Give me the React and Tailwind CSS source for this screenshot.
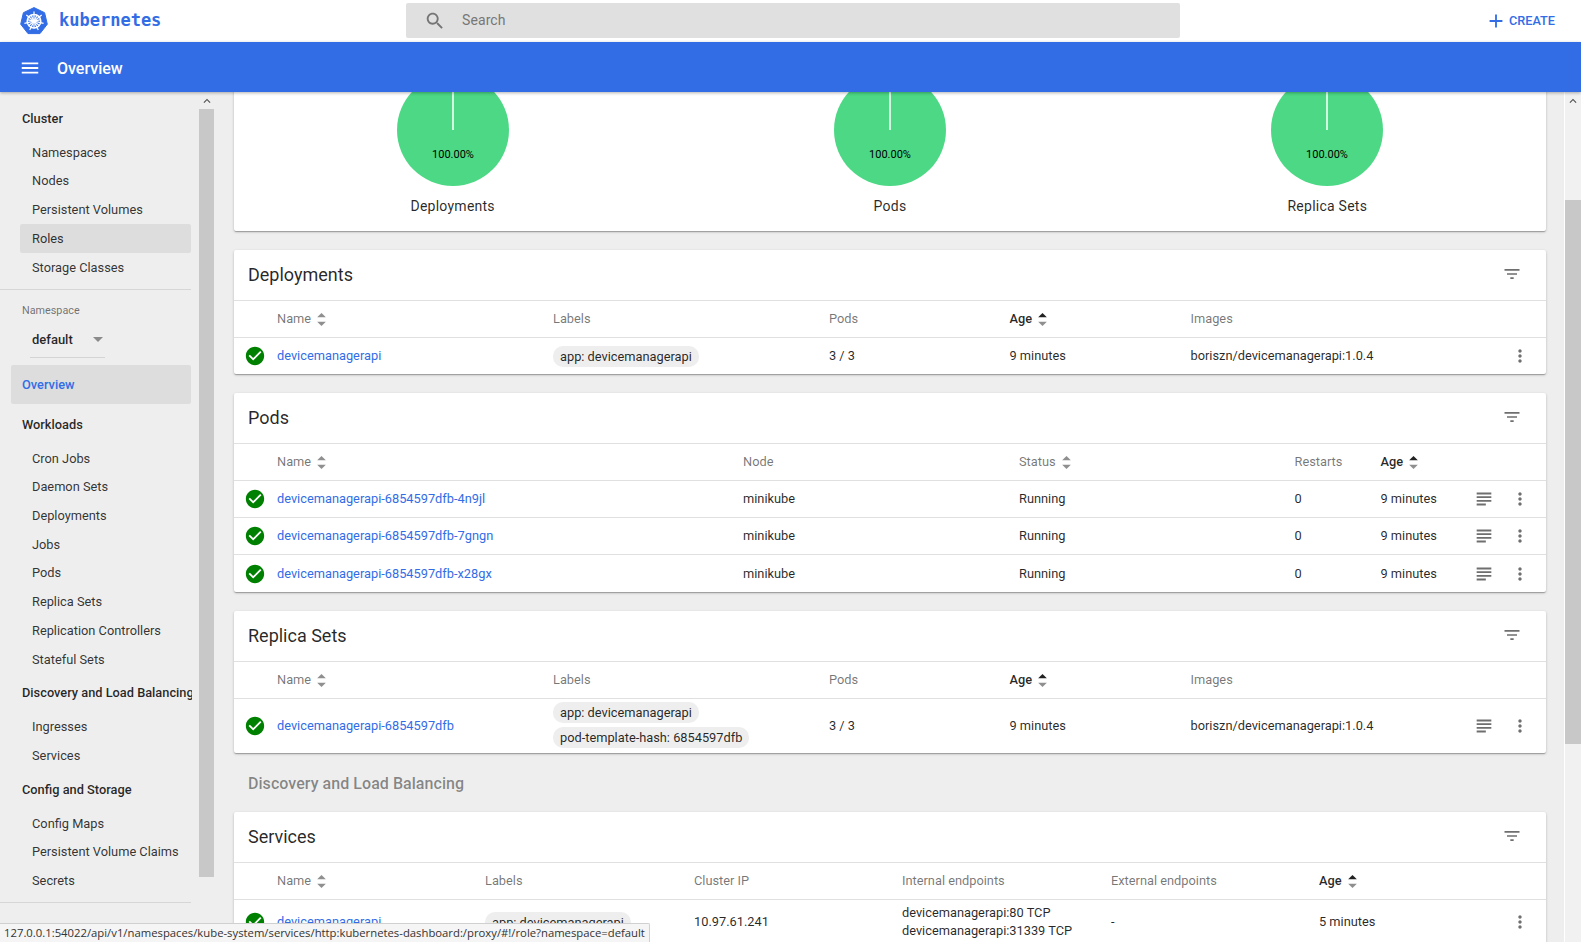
const SORT_UP = "M4 0 L8 4 L0 4 Z";
const SORT_DOWN = "M4 12 L8 8 L0 8 Z";

function Icon({ d, size = 24, className = "" }) {
  return (
    <svg viewBox="0 0 24 24" width={size} height={size} className={className} fill="currentColor">
      <path d={d} />
    </svg>
  );
}

const icons = {
  search:
    "M15.5 14h-.79l-.28-.27C15.41 12.59 16 11.11 16 9.5 16 5.91 13.09 3 9.5 3S3 5.91 3 9.5 5.91 16 9.5 16c1.61 0 3.09-.59 4.23-1.57l.27.28v.79l5 4.99L20.49 19l-4.99-5zm-6 0C7.01 14 5 11.99 5 9.5S7.01 5 9.5 5 14 7.01 14 9.5 11.99 14 9.5 14z",
  menu: "M3 18h18v-2H3v2zm0-5h18v-2H3v2zm0-7v2h18V6H3z",
  plus: "M19 13h-6v6h-2v-6H5v-2h6V5h2v6h6v2z",
  filter: "M10 18h4v-2h-4v2zM3 6v2h18V6H3zm3 7h12v-2H6v2z",
  lines: "M14 17H4v2h10v-2zm6-8H4v2h16V9zM4 15h16v-2H4v2zM4 5v2h16V5H4z",
  more: "M12 8c1.1 0 2-.9 2-2s-.9-2-2-2-2 .9-2 2 .9 2 2 2zm0 2c-1.1 0-2 .9-2 2s.9 2 2 2 2-.9 2-2-.9-2-2-2zm0 6c-1.1 0-2 .9-2 2s.9 2 2 2 2-.9 2-2-.9-2-2-2z",
  check: "M12 2C6.48 2 2 6.48 2 12s4.48 10 10 10 10-4.48 10-10S17.52 2 12 2zm-2 15l-5-5 1.41-1.41L10 14.17l7.59-7.59L19 8l-9 9z",
  up: "M7.41 15.41L12 10.83l4.59 4.58L18 14l-6-6-6 6z",
};

function Logo() {
  const spokes = [0, 1, 2, 3, 4, 5, 6].map((i) => (i * 360) / 7);
  return (
    <svg viewBox="0 0 28 28" width="28" height="28">
      <path d="M14 .6 L24.6 5.7 L27.3 17.2 L20 26.6 L8 26.6 L.7 17.2 L3.4 5.7 Z" fill="#326de6" stroke="#326de6" strokeLinejoin="round" />
      <circle cx="14" cy="14.2" r="6.8" fill="none" stroke="#fff" strokeWidth="1.5" />
      <circle cx="14" cy="14.2" r="1.3" fill="#fff" />
      {spokes.map((a) => (
        <line key={a} x1="14" y1="14.2" x2="14" y2="4.4" stroke="#fff" strokeWidth="1.2" transform={`rotate(${a} 14 14.2)`} />
      ))}
      {spokes.map((a) => (
        <line key={`b${a}`} x1="14" y1="14.2" x2="14" y2="7" stroke="#fff" strokeWidth="1.2" transform={`rotate(${a + 25.7} 14 14.2)`} />
      ))}
    </svg>
  );
}

function SidebarTitle({ children }) {
  return (
    <div className="h-[34px] w-[192px] pl-[22px] flex items-center overflow-hidden whitespace-nowrap text-[12.8px] font-medium text-black/85">
      {children}
    </div>
  );
}

function SidebarItem({ label, active }) {
  return (
    <div
      className={`h-[28.7px] ml-[20px] w-[171px] pl-[12px] flex items-center text-[12.8px] text-black/80 rounded-[2px] ${active ? "bg-[#dddddd]" : ""}`}
    >
      {label}
    </div>
  );
}

function Sidebar() {
  return (
    <aside className="w-[214px] shrink-0 flex bg-[#eeeeee] overflow-hidden">
      <div className="w-[199px] shrink-0 pt-[10px]">
        <SidebarTitle>Cluster</SidebarTitle>
        <div className="pt-[2px]">
          {["Namespaces", "Nodes", "Persistent Volumes"].map((l) => (
            <SidebarItem key={l} label={l} />
          ))}
          <SidebarItem label="Roles" active />
          <SidebarItem label="Storage Classes" />
        </div>
        <div className="mt-[7.5px] w-[191px] border-t border-[#d6d6d6]" />
        <div className="mt-[14px] ml-[22px] text-[10.8px] leading-[14px] text-black/55">Namespace</div>
        <div className="mt-[9px] ml-[30px] w-[75px] h-[31px] flex items-center justify-between border-b border-[#d4d4d4] pl-[2px] pr-[2px] pb-[4px]">
          <span className="text-[13px] font-medium text-black/85">default</span>
          <span className="w-0 h-0 border-x-[5px] border-x-transparent border-t-[5px] border-t-[#8a8a8a]" />
        </div>
        <div className="mt-[7px] ml-[11px] w-[180px] h-[39px] pl-[11px] flex items-center bg-[#dddddd] rounded-[2px] text-[12.8px] font-medium text-[#326de6]">
          Overview
        </div>
        <div className="mt-[4px]">
          <SidebarTitle>Workloads</SidebarTitle>
        </div>
        <div className="pt-[2px]">
          {["Cron Jobs", "Daemon Sets", "Deployments", "Jobs", "Pods", "Replica Sets", "Replication Controllers", "Stateful Sets"].map((l) => (
            <SidebarItem key={l} label={l} />
          ))}
        </div>
        <div className="mt-[2px]">
          <SidebarTitle>Discovery and Load Balancing</SidebarTitle>
        </div>
        <div className="pt-[3px]">
          {["Ingresses", "Services"].map((l) => (
            <SidebarItem key={l} label={l} />
          ))}
        </div>
        <div className="mt-[3px]">
          <SidebarTitle>Config and Storage</SidebarTitle>
        </div>
        <div className="pt-[2px]">
          {["Config Maps", "Persistent Volume Claims", "Secrets"].map((l) => (
            <SidebarItem key={l} label={l} />
          ))}
        </div>
        <div className="mt-[7px] w-[191px] border-t border-[#d6d6d6]" />
      </div>
      <Scrollbar thumbTop={0} thumbHeight={768} />
    </aside>
  );
}

function Scrollbar({ thumbTop, thumbHeight }) {
  return (
    <div className="w-[15px] shrink-0 flex flex-col items-stretch">
      <div className="h-[17px] flex items-center justify-center text-[#505050] shrink-0">
        <Icon d={icons.up} size={14} />
      </div>
      <div style={{ marginTop: thumbTop, height: thumbHeight }} className="bg-[#c8c8c8] shrink-0" />
    </div>
  );
}

function SortHeader({ label, sort, active }) {
  return (
    <div className={`flex items-center gap-[6px] text-[12.8px] ${active ? "font-medium text-black/85" : "text-black/55"}`}>
      <span>{label}</span>
      {sort && (
        <svg viewBox="0 0 8 12" width="9" height="13">
          <path d={SORT_UP} fill={active ? "#222222" : "#8f8f8f"} />
          <path d={SORT_DOWN} fill="#8f8f8f" />
        </svg>
      )}
    </div>
  );
}

function Chip({ children }) {
  return <span className="inline-block h-[21px] leading-[21px] px-[7px] rounded-[10px] bg-[#eeeeee] text-[12.8px] whitespace-nowrap text-black/85">{children}</span>;
}

function Actions({ lines = true }) {
  return (
    <div className="flex items-center justify-end pr-[16px] text-[#6f6f6f]">
      {lines && <Icon d={icons.lines} size={22} className="mr-[15px]" />}
      <Icon d={icons.more} size={20} />
    </div>
  );
}

function StatusIcon() {
  return (
    <div className="flex justify-center pr-[1px] text-[#008000]">
      <Icon d={icons.check} size={22} />
    </div>
  );
}

function Card({ title, grid, head, rows }) {
  return (
    <section className="bg-white rounded-[2px] shadow-[0_1px_3px_0_rgba(0,0,0,0.2),0_1px_1px_0_rgba(0,0,0,0.14),0_2px_1px_-1px_rgba(0,0,0,0.12)]">
      <div className="h-[51px] pl-[14px] pr-[24px] pb-[2px] flex items-center justify-between border-b border-[#e0e0e0]">
        <h2 className="text-[18px] text-black/85">{title}</h2>
        <Icon d={icons.filter} size={20} className="text-[#6f6f6f]" />
      </div>
      <div className={`${grid} h-[37px] items-center border-b border-[#e0e0e0]`}>
        <div />
        {head.map((h) => (
          <SortHeader key={h.label} {...h} />
        ))}
      </div>
      {rows.map((row, i) => (
        <div
          key={i}
          className={`${grid} ${row.height || "h-[37px]"} items-center text-[12.8px] text-black/85 ${i < rows.length - 1 ? "border-b border-[#e0e0e0]" : ""}`}
        >
          <StatusIcon />
          {row.cells}
          <Actions lines={row.lines} />
        </div>
      ))}
    </section>
  );
}

const link = (t) => <a className="text-[#326de6] whitespace-nowrap">{t}</a>;

const DEPLOY_GRID = "grid grid-cols-[43px_276px_276px_180.5px_181px_1fr_130px]";
const POD_GRID = "grid grid-cols-[43px_466px_276px_275.5px_86px_1fr_90px]";
const SERVICE_GRID = "grid grid-cols-[43px_208px_209px_208px_209px_208px_1fr_60px]";

function Pie({ label }) {
  return (
    <div className="flex flex-col items-center">
      <svg width="112" height="112" viewBox="0 0 112 112">
        <circle cx="56" cy="56" r="56" fill="#4cd884" />
        <line x1="56" y1="0" x2="56" y2="56" stroke="#ffffff" strokeWidth="1.5" />
        <text x="56" y="84" textAnchor="middle" fontSize="11" fill="#000000">100.00%</text>
      </svg>
      <div className="mt-[10px] text-[14px] tracking-[0.25px] text-black/85">{label}</div>
    </div>
  );
}

function podRow(name) {
  return {
    cells: (
      <>
        <div>{link(name)}</div>
        <div>minikube</div>
        <div>Running</div>
        <div>0</div>
        <div>9 minutes</div>
      </>
    ),
  };
}

export default function App() {
  return (
    <div className="relative h-[942px] w-[1581px] overflow-hidden flex flex-col bg-[#eeeeee] font-['Roboto',sans-serif] text-black/85">
      <header className="h-[42px] shrink-0 bg-white flex items-center">
        <div className="w-[406px] shrink-0 pl-[20px] flex items-center gap-[11px]">
          <Logo />
          <span className="font-['DejaVu_Sans_Mono',monospace] font-bold text-[17px] text-[#326de6]">kubernetes</span>
        </div>
        <div className="w-[774px] h-[35px] mt-[-1px] bg-[#e0e0e0] rounded-[2px] flex items-center pl-[18px] text-[#757575]">
          <Icon d={icons.search} size={22} />
          <span className="ml-[16px] text-[14px] tracking-[0.1px] text-[#777777]">Search</span>
        </div>
        <div className="ml-auto pr-[26px] flex items-center gap-[2px] text-[#326de6]">
          <Icon d={icons.plus} size={22} />
          <span className="text-[12.7px] font-medium">CREATE</span>
        </div>
      </header>

      <div className="relative z-10 h-[50px] shrink-0 bg-[#326de6] flex items-center pl-[19px] shadow-[0_1px_3px_rgba(0,0,0,0.3)]">
        <Icon d={icons.menu} size={22} className="text-white mt-[1px]" />
        <span className="ml-[16px] mt-[3px] text-[16px] font-medium text-white">Overview</span>
      </div>

      <div className="flex flex-1 min-h-0">
        <Sidebar />
        <main className="flex-1 min-w-0 overflow-hidden">
          <div className="pl-[20px] pr-[18px] mt-[-40px] flex flex-col">
            <section className="h-[179px] pt-[22px] bg-white rounded-[2px] grid grid-cols-3 shadow-[0_1px_3px_0_rgba(0,0,0,0.2),0_1px_1px_0_rgba(0,0,0,0.14),0_2px_1px_-1px_rgba(0,0,0,0.12)]">
              <Pie label="Deployments" />
              <Pie label="Pods" />
              <Pie label="Replica Sets" />
            </section>

            <div className="mt-[19px]">
              <Card
                title="Deployments"
                grid={DEPLOY_GRID}
                head={[
                  { label: "Name", sort: true },
                  { label: "Labels" },
                  { label: "Pods" },
                  { label: "Age", sort: true, active: true },
                  { label: "Images" },
                ]}
                rows={[
                  {
                    height: "h-[36px]",
                    lines: false,
                    cells: (
                      <>
                        <div>{link("devicemanagerapi")}</div>
                        <div><Chip>app: devicemanagerapi</Chip></div>
                        <div>3 / 3</div>
                        <div>9 minutes</div>
                        <div className="whitespace-nowrap">boriszn/devicemanagerapi:1.0.4</div>
                      </>
                    ),
                  },
                ]}
              />
            </div>

            <div className="mt-[19px]">
              <Card
                title="Pods"
                grid={POD_GRID}
                head={[
                  { label: "Name", sort: true },
                  { label: "Node" },
                  { label: "Status", sort: true },
                  { label: "Restarts" },
                  { label: "Age", sort: true, active: true },
                ]}
                rows={[
                  podRow("devicemanagerapi-6854597dfb-4n9jl"),
                  podRow("devicemanagerapi-6854597dfb-7gngn"),
                  podRow("devicemanagerapi-6854597dfb-x28gx"),
                ]}
              />
            </div>

            <div className="mt-[19px]">
              <Card
                title="Replica Sets"
                grid={DEPLOY_GRID}
                head={[
                  { label: "Name", sort: true },
                  { label: "Labels" },
                  { label: "Pods" },
                  { label: "Age", sort: true, active: true },
                  { label: "Images" },
                ]}
                rows={[
                  {
                    height: "h-[54px]",
                    cells: (
                      <>
                        <div>{link("devicemanagerapi-6854597dfb")}</div>
                        <div className="flex flex-col items-start gap-[4px] mt-[-2px]">
                          <Chip>app: devicemanagerapi</Chip>
                          <Chip>pod-template-hash: 6854597dfb</Chip>
                        </div>
                        <div>3 / 3</div>
                        <div>9 minutes</div>
                        <div className="whitespace-nowrap">boriszn/devicemanagerapi:1.0.4</div>
                      </>
                    ),
                  },
                ]}
              />
            </div>

            <h3 className="mt-[21px] ml-[14px] h-[20px] text-[16px] tracking-[0.05px] leading-[20px] font-medium text-black/45">
              Discovery and Load Balancing
            </h3>

            <div className="mt-[18px]">
              <Card
                title="Services"
                grid={SERVICE_GRID}
                head={[
                  { label: "Name", sort: true },
                  { label: "Labels" },
                  { label: "Cluster IP" },
                  { label: "Internal endpoints" },
                  { label: "External endpoints" },
                  { label: "Age", sort: true, active: true },
                ]}
                rows={[
                  {
                    height: "h-[44px]",
                    lines: false,
                    cells: (
                      <>
                        <div>{link("devicemanagerapi")}</div>
                        <div><Chip>app: devicemanagerapi</Chip></div>
                        <div>10.97.61.241</div>
                        <div className="leading-[18px] whitespace-nowrap">
                          <div>devicemanagerapi:80 TCP</div>
                          <div>devicemanagerapi:31339 TCP</div>
                        </div>
                        <div>-</div>
                        <div>5 minutes</div>
                      </>
                    ),
                  },
                ]}
              />
            </div>
          </div>
        </main>
        <div className="w-[17px] shrink-0 border-l border-white bg-[#f1f1f1] flex flex-col">
          <div className="h-[17px] flex items-center justify-center text-[#505050] shrink-0">
            <Icon d={icons.up} size={14} />
          </div>
          <div className="mt-[91px] h-[544px] bg-[#c8c8c8] shrink-0" />
        </div>
      </div>

      <div className="absolute left-0 bottom-0 z-20 w-[650px] h-[19px] pl-[4px] flex items-center bg-[#f5f5f5] border-t border-r border-[#d0d0d0] rounded-tr-[2px] font-['Open_Sans',sans-serif] text-[11.3px] text-[#333333] whitespace-nowrap">
        127.0.0.1:54022/api/v1/namespaces/kube-system/services/http:kubernetes-dashboard:/proxy/#!/role?namespace=default
      </div>
    </div>
  );
}
